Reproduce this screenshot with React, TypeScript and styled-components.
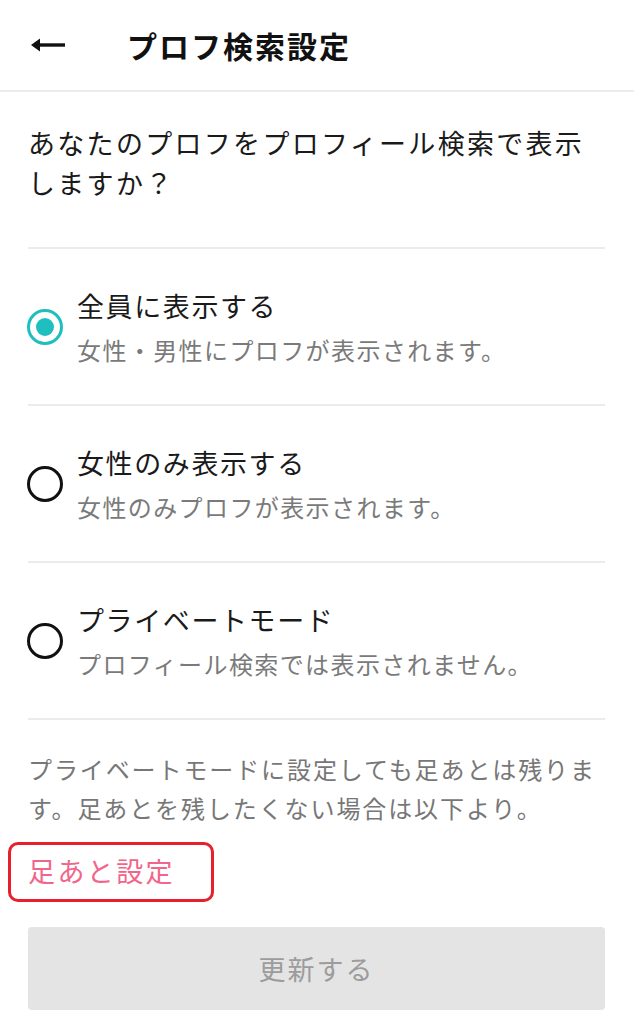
import React, {useState} from 'react';
import styled, {createGlobalStyle} from 'styled-components';

const GlobalStyle = createGlobalStyle`
  html, body {
    margin: 0;
    padding: 0;
    background: #fff;
  }
  body {
    font-family: "Noto Sans CJK JP", "Noto Sans", sans-serif;
    color: #222;
  }
`;

const Page = styled.div`
  width: 634px;
  min-height: 1024px;
  background: #fff;
`;

const Header = styled.header`
  height: 90px;
  display: flex;
  align-items: center;
  padding-left: 30px;
  border-bottom: 2px solid #ebebeb;
  box-sizing: content-box;
`;

const BackButton = styled.button`
  border: 0;
  background: none;
  padding: 0;
  width: 36px;
  height: 24px;
  display: flex;
  align-items: center;
  margin-right: 62px;
  cursor: pointer;
`;

const Title = styled.h1`
  margin: 0 0 0 -1px;
  font-size: 30px;
  font-weight: 700;
  letter-spacing: 2px;
  line-height: 40px;
  color: #111;
`;

const Content = styled.main`
  padding: 0 29px 0 28px;
`;

const Question = styled.p`
  margin: 31px 0 44px;
  font-size: 27px;
  line-height: 40px;
  letter-spacing: 2.3px;
  color: #1a1a1a;
`;

const OptionList = styled.div`
  border-top: 2px solid #ebebeb;
`;

const OptionRow = styled.label`
  display: flex;
  align-items: center;
  height: 155px;
  border-bottom: 2px solid #ebebeb;
  cursor: pointer;
`;

const Radio = styled.span<{ $checked: boolean }>`
  flex: none;
  width: 36px;
  height: 36px;
  box-sizing: border-box;
  border-radius: 50%;
  border: 3.5px solid ${p => (p.$checked ? '#1fbfbf' : '#111')};
  display: flex;
  align-items: center;
  justify-content: center;
  margin-right: 14px;
  margin-left: -1px;

  &::after {
    content: '';
    width: 18px;
    height: 18px;
    border-radius: 50%;
    background: #1fbfbf;
    display: ${p => (p.$checked ? 'block' : 'none')};
  }
`;

const OptionText = styled.div`
  display: flex;
  flex-direction: column;
`;

const OptionTitle = styled.span`
  font-size: 27px;
  line-height: 40px;
  letter-spacing: 1.6px;
  color: #1a1a1a;
`;

const OptionSub = styled.span`
  margin-top: 6px;
  font-size: 24px;
  line-height: 36px;
  letter-spacing: 1.4px;
  color: #7a7a7a;
`;

const Note = styled.p`
  margin: 29px 0 15px;
  font-size: 24px;
  line-height: 39px;
  letter-spacing: 1.9px;
  color: #777;
`;

const LinkBox = styled.a`
  display: inline-block;
  margin-left: -20px;
  padding: 6px 36px 8px 17px;
  border: 3.5px solid #e8202c;
  border-radius: 10px;
  font-size: 27px;
  line-height: 40px;
  letter-spacing: 2.4px;
  color: #f2658a;
  text-decoration: none;
`;

const SubmitButton = styled.button`
  display: block;
  width: 100%;
  height: 83px;
  margin-top: 25px;
  border: 0;
  border-radius: 4px;
  background: #e4e4e4;
  color: #9c9c9c;
  font-family: "Noto Sans CJK JP", "Noto Sans", sans-serif;
  font-size: 27px;
  letter-spacing: 2px;
`;

const options = [
    { title: '全員に表示する', sub: '女性・男性にプロフが表示されます。' },
    { title: '女性のみ表示する', sub: '女性のみプロフが表示されます。' },
    { title: 'プライベートモード', sub: 'プロフィール検索では表示されません。' },
];

export default function App() {
    const [selected, setSelected] = useState(0);

    return (
        <Page>
            <GlobalStyle />
            <Header>
                <BackButton aria-label="戻る">
                    <svg width="36" height="24" viewBox="0 0 36 24">
                        <path d="M35 12H7" stroke="#111" strokeWidth="3.4" fill="none" />
                        <path d="M1 12L10 5.5V18.5Z" fill="#111" />
                    </svg>
                </BackButton>
                <Title>プロフ検索設定</Title>
            </Header>
            <Content>
                <Question>あなたのプロフをプロフィール検索で表示しますか？</Question>
                <OptionList>
                    {options.map((o, i) => (
                        <OptionRow key={o.title} onClick={() => setSelected(i)}>
                            <Radio $checked={selected === i} />
                            <OptionText>
                                <OptionTitle>{o.title}</OptionTitle>
                                <OptionSub>{o.sub}</OptionSub>
                            </OptionText>
                        </OptionRow>
                    ))}
                </OptionList>
                <Note>プライベートモードに設定しても足あとは残ります。足あとを残したくない場合は以下より。</Note>
                <LinkBox href="#">足あと設定</LinkBox>
                <SubmitButton disabled>更新する</SubmitButton>
            </Content>
        </Page>
    );
}
